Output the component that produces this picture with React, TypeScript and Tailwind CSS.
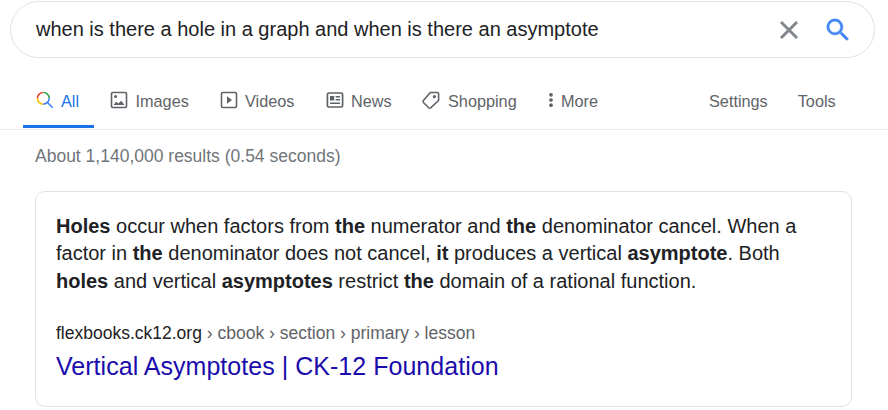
import type { ReactNode } from "react";

function SearchGlyph({ className }: { className: string }) {
  return (
    <svg viewBox="0 0 24 24" className={className} fill="#4285f4" stroke="#4285f4" strokeWidth="0.3">
      <path d="M15.5 14h-.79l-.28-.27A6.47 6.47 0 0 0 16 9.5 6.5 6.5 0 1 0 9.5 16c1.61 0 3.09-.59 4.23-1.57l.27.28v.79l5 4.99L20.49 19l-4.99-5zm-6 0C7.01 14 5 11.99 5 9.5S7.01 5 9.5 5 14 7.01 14 9.5 11.99 14 9.5 14z" />
    </svg>
  );
}

function ClearGlyph() {
  return (
    <svg viewBox="0 0 24 24" className="size-[30px]" fill="#80868b" stroke="#80868b" strokeWidth="0.4">
      <path d="M19 6.41L17.59 5 12 10.59 6.41 5 5 6.41 10.59 12 5 17.59 6.41 19 12 13.41 17.59 19 19 17.59 13.41 12z" />
    </svg>
  );
}

function AllIcon() {
  return (
    <svg viewBox="0 0 24 24" className="size-5 shrink-0">
      <path fill="#34a853" d="M10 2v2a6 6 0 0 1 6 6h2a8 8 0 0 0-8-8" />
      <path fill="#ea4335" d="M10 4V2a8 8 0 0 0-8 8h2c0-3.3 2.7-6 6-6" />
      <path fill="#fbbc04" d="M4 10H2a8 8 0 0 0 8 8v-2c-3.3 0-6-2.69-6-6" />
      <path
        fill="#4285f4"
        d="M22 20.59l-5.69-5.69A7.96 7.96 0 0 0 18 10h-2a6 6 0 0 1-6 6v2c1.85 0 3.52-.64 4.88-1.68l5.69 5.69L22 20.59"
      />
    </svg>
  );
}

function ImagesIcon() {
  return (
    <svg viewBox="0 0 20 20" className="size-5 shrink-0" fill="#5f6368">
      <rect x="2.5" y="2.5" width="15" height="15" rx="1.2" fill="none" stroke="#5f6368" strokeWidth="1.6" />
      <circle cx="6.6" cy="6.6" r="1.5" />
      <path d="M5 15v-.8l2.2-2.5 2.2 1.8 2.8-2.7 2.8 3.4v.8z" />
    </svg>
  );
}

function VideosIcon() {
  return (
    <svg viewBox="0 0 20 20" className="size-5 shrink-0" fill="#5f6368">
      <rect x="2.5" y="2.5" width="15" height="15" rx="1.2" fill="none" stroke="#5f6368" strokeWidth="1.6" />
      <path d="M8 6.3v7.4l5-3.7z" />
    </svg>
  );
}

function NewsIcon() {
  return (
    <svg viewBox="0 0 20 20" className="size-5 shrink-0" fill="#5f6368">
      <rect x="2.4" y="3" width="15.2" height="14" rx="1.6" fill="none" stroke="#5f6368" strokeWidth="1.7" />
      <path d="M5 6h4.2v4.4H5zM10.6 6H15v1.4h-4.4zM10.6 9H15v1.4h-4.4zM5 12.4h10v1.5H5z" />
    </svg>
  );
}

function ShoppingIcon() {
  return (
    <svg viewBox="0 0 24 24" className="size-5 shrink-0" fill="#5f6368">
      <path d="M11.2 3H19.6A1.5 1.5 0 0 1 21.1 4.5V12.6L11.6 21.5Q10.4 22.3 9.3 21.3L2.9 15Q1.9 13.9 2.9 12.7z" fill="none" stroke="#5f6368" strokeWidth="1.9" strokeLinejoin="round" />
      <circle cx="16" cy="8" r="1.9" />
    </svg>
  );
}

function MoreIcon() {
  return (
    <svg viewBox="0 0 4 20" className="h-5 w-1 shrink-0" fill="#5f6368">
      <circle cx="2" cy="4.8" r="1.85" />
      <circle cx="2" cy="10" r="1.85" />
      <circle cx="2" cy="15.2" r="1.85" />
    </svg>
  );
}

function Tab({ icon, label, className }: { icon: ReactNode; label: string; className: string }) {
  return (
    <div className={`flex shrink-0 items-center ${className}`}>
      {icon}
      <span className="pt-px">{label}</span>
    </div>
  );
}

export default function App() {
  return (
    <div className="h-[410px] w-[888px] overflow-hidden bg-white font-['Liberation_Sans',Arial,sans-serif] whitespace-nowrap text-[#202124]">
      <header className="pt-px pl-2.5">
        <div className="flex h-[57px] w-[865px] items-center rounded-full border border-[#dfe1e5] pr-[21px] pl-[25px]">
          <span className="grow pb-0.5 text-[20px] leading-6">when is there a hole in a graph and when is there an asymptote</span>
          <ClearGlyph />
          <SearchGlyph className="ml-[19px] size-[30px]" />
        </div>
      </header>

      <nav className="mt-[14px] flex h-[58px] items-stretch border-b border-[#ebebeb] pl-[23px] text-[16.25px] leading-5 text-[#5f6368]">
        <Tab icon={<AllIcon />} label="All" className="mb-px w-[71px] gap-1.5 border-b-3 border-[#1a73e8] pt-[3px] pl-3 text-[#1a73e8]" />
        <Tab icon={<ImagesIcon />} label="Images" className="mb-px ml-[15px] w-[110px] gap-[6.5px]" />
        <Tab icon={<VideosIcon />} label="Videos" className="mb-px w-[106px] gap-1.5" />
        <Tab icon={<NewsIcon />} label="News" className="mb-px w-[96px] gap-1.5" />
        <Tab icon={<ShoppingIcon />} label="Shopping" className="mb-px w-[128px] gap-[7px]" />
        <Tab icon={<MoreIcon />} label="More" className="mb-px w-[160px] gap-2" />
        <div className="mb-px flex items-center gap-[30px] pt-px">
          <span>Settings</span>
          <span>Tools</span>
        </div>
      </nav>

      <main className="pl-[35px]">
        <p className="mt-4 text-[17.5px] leading-5 text-[#70757a]">About 1,140,000 results (0.54 seconds)</p>
        <section className="mt-[25px] h-[216px] w-[817px] rounded-[10px] border border-[#dfe1e5] px-5 pt-[20.5px]">
          <p className="text-[20px] leading-[27.5px]">
            <b>Holes</b> occur when factors from <b>the</b> numerator and <b>the</b> denominator cancel. When a
            <br />
            factor in <b>the</b> denominator does not cancel, <b>it</b> produces a vertical <b>asymptote</b>. Both
            <br />
            <b>holes</b> and vertical <b>asymptotes</b> restrict <b>the</b> domain of a rational function.
          </p>
          <cite className="mt-[26.5px] block text-[17.5px] leading-[22px] text-[#5f6368] not-italic">
            <span className="text-[#202124]">flexbooks.ck12.org</span> › cbook › section › primary › lesson
          </cite>
          <h3 className="mt-1.5 text-[25px] leading-8 tracking-[0.03px] text-[#1a0dab]">Vertical Asymptotes | CK-12 Foundation</h3>
        </section>
      </main>
    </div>
  );
}
